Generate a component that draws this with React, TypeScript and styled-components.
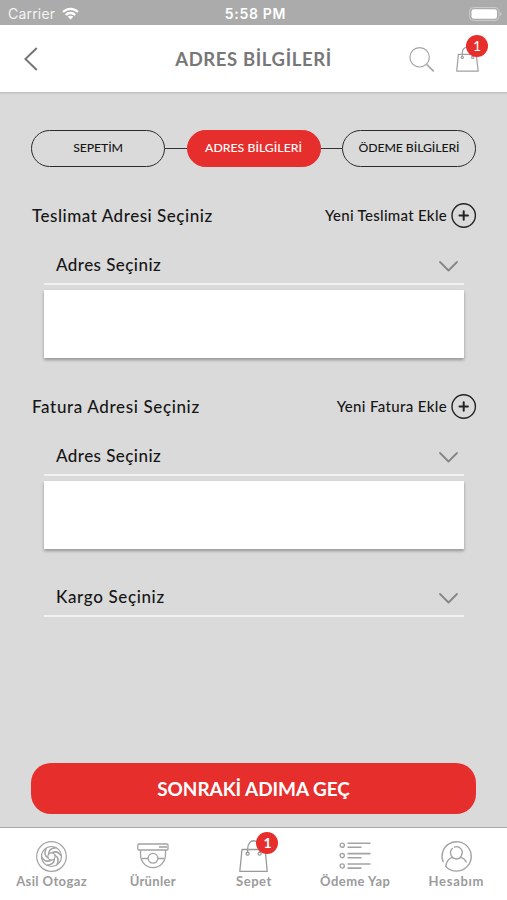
import React from "react";
import styled, { createGlobalStyle } from "styled-components";

const RED = "#e62e2d";
const INK = "#161616";
const GREY = "#a3a3a3";

const GlobalStyle = createGlobalStyle`
  * { box-sizing: border-box; }
  html, body { margin: 0; padding: 0; }
  body { font-family: Lato, "Open Sans", sans-serif; background: #dadada; color: ${INK}; }
  button { font: inherit; color: inherit; background: none; border: 0; padding: 0; margin: 0; }
  svg { display: block; fill: none; flex: none; overflow: visible; }
`;

const Screen = styled.div`
  width: 507px;
  height: 900px;
  display: flex;
  flex-direction: column;
  overflow: hidden;
  background: #dadada;
`;

const StatusBar = styled.div`
  height: 25px;
  flex: none;
  display: grid;
  grid-template-columns: 1fr auto 1fr;
  align-items: center;
  padding: 2px 5px 0 8px;
  background: #ababab;
  color: #fff;
  font-family: Inter, sans-serif;
  font-size: 14px;
`;

const Carrier = styled.div`
  display: flex;
  align-items: center;
  gap: 7px;
  letter-spacing: 0.2px;
  color: #f4f4f4;
`;

const Clock = styled.div`
  padding-left: 1px;
  font-weight: 600;
  letter-spacing: 0.68px;
`;

const Battery = styled.div`
  justify-self: end;
`;

const Header = styled.header`
  height: 68px;
  flex: none;
  display: grid;
  grid-template-columns: 150px 1fr 150px;
  align-items: center;
  background: #fff;
  border-bottom: 1px solid #c2c2c2;
  box-shadow: 0 1px 1px rgba(0, 0, 0, 0.06);
`;

const BackButton = styled.button`
  padding: 1px 0 0 24px;
  justify-self: start;
`;

const Title = styled.h1`
  margin: 0;
  text-align: center;
  white-space: nowrap;
  font-size: 18.5px;
  font-weight: 700;
  letter-spacing: 0.61px;
  color: #777;
`;

const Actions = styled.div`
  display: flex;
  align-items: center;
  gap: 22px;
  padding: 1px 0 0 52px;
`;

const BagWrap = styled.span<{ $w: number; $h: number }>`
  position: relative;
  display: block;
  width: ${(p) => p.$w}px;
  height: ${(p) => p.$h}px;
`;

const Badge = styled.span<{ $bold?: boolean; $top: number; $left: number }>`
  position: absolute;
  top: ${(p) => p.$top}px;
  left: ${(p) => p.$left}px;
  width: 22px;
  height: 22px;
  border-radius: 50%;
  background: ${RED};
  color: #fff;
  font-size: 14px;
  line-height: 22px;
  text-align: center;
  letter-spacing: 0;
  font-weight: ${(p) => (p.$bold ? 700 : 400)};
`;

const Content = styled.main`
  flex: 1;
  display: flex;
  flex-direction: column;
  padding: 37px 31px 13px;
`;

const Steps = styled.div`
  display: flex;
  align-items: center;
  height: 37px;
  flex: none;
`;

const Step = styled.div<{ $active?: boolean; $ls: number }>`
  width: 134px;
  height: 37px;
  display: flex;
  align-items: center;
  justify-content: center;
  border: 1.5px solid ${(p) => (p.$active ? RED : "#2b2b2b")};
  border-radius: 19px;
  background: ${(p) => (p.$active ? RED : "transparent")};
  color: ${(p) => (p.$active ? "#fff" : INK)};
  font-size: 12.3px;
  font-weight: 500;
  letter-spacing: ${(p) => p.$ls}px;
  white-space: nowrap;
  padding-bottom: 2px;
`;

const Connector = styled.div`
  flex: 1;
  height: 1.5px;
  background: #333;
`;

const Section = styled.section<{ $gap: number }>`
  margin-top: ${(p) => p.$gap}px;
`;

const SectionHead = styled.div`
  height: 25px;
  display: flex;
  align-items: center;
  justify-content: space-between;
`;

const SectionTitle = styled.h2<{ $ls: number }>`
  margin: 0 0 0 1px;
  font-size: 17px;
  font-weight: 500;
  letter-spacing: ${(p) => p.$ls}px;
  color: ${INK};
`;

const AddButton = styled.button<{ $ls: number }>`
  display: flex;
  align-items: center;
  gap: 4px;
  font-size: 15px;
  font-weight: 500;
  letter-spacing: ${(p) => p.$ls}px;
`;

const AddLabel = styled.span`
  padding-bottom: 1px;
`;

const Select = styled.div<{ $ls: number; $gap: number }>`
  height: 38px;
  margin: ${(p) => p.$gap}px 12px 0 13px;
  padding: 0 6px 0 12px;
  display: flex;
  align-items: center;
  justify-content: space-between;
  border-bottom: 2px solid #f1f1f1;
  font-size: 17px;
  font-weight: 500;
  letter-spacing: ${(p) => p.$ls}px;
`;

const SelectLabel = styled.span`
  padding-bottom: 2px;
`;

const AddressBox = styled.div`
  height: 68px;
  margin: 5px 12px 0 13px;
  background: #fff;
  box-shadow: 0 2px 3px rgba(0, 0, 0, 0.32);
`;

const NextButton = styled.button`
  margin-top: auto;
  height: 51px;
  flex: none;
  border-radius: 20px;
  background: ${RED};
  color: #fff;
  font-size: 19px;
  font-weight: 700;
  letter-spacing: -0.08px;
`;

const TabBar = styled.nav`
  height: 73px;
  flex: none;
  display: grid;
  grid-template-columns: repeat(5, 1fr);
  padding-left: 1px;
  background: #fff;
  border-top: 1px solid #a9a9a9;
`;

const Tab = styled.a<{ $ls: number }>`
  display: flex;
  flex-direction: column;
  align-items: center;
  padding-top: 12px;
  color: #9b9b9b;
  font-size: 13px;
  font-weight: 700;
  line-height: 18px;
  letter-spacing: ${(p) => p.$ls}px;
  white-space: nowrap;
`;

const TabIcon = styled.span<{ $pad?: number }>`
  height: 32px;
  padding-top: ${(p) => p.$pad ?? 0}px;
  display: flex;
  align-items: flex-start;
  justify-content: center;
`;

const Plus = () => (
  <svg width="25" height="25" viewBox="0 0 25 25" stroke="#222">
    <circle cx="12.7" cy="12.5" r="11.7" strokeWidth="1.4" />
    <path d="M12.7 8.3v8.4M8.5 12.5h8.4" strokeWidth="2" strokeLinecap="round" />
  </svg>
);

const Chevron = () => (
  <svg width="19" height="14" viewBox="0 -3 19 14" stroke="#868686" strokeWidth="1.8" strokeLinecap="round" strokeLinejoin="round">
    <path d="M1 1l8.5 8.5L18 1" />
  </svg>
);

const Wifi = () => (
  <svg width="17" height="13" viewBox="0 0 17 13" stroke="#fff" strokeWidth="2.3">
    <path d="M1 5C5.2.7 11.8.7 16 5M3.8 8c2.7-2.7 6.7-2.7 9.4 0" />
    <path d="M5.7 9.8c1.6-1.5 4-1.5 5.6 0L8.5 12.6z" fill="#fff" stroke="none" />
  </svg>
);

const BatteryIcon = () => (
  <svg width="33" height="14" viewBox="0 0 33 14">
    <rect x="0.5" y="0.5" width="29.5" height="13" rx="4" stroke="#cacaca" />
    <rect x="2.5" y="2.2" width="25.5" height="9.6" rx="2.3" fill="#fff" />
    <path d="M31.3 5c1.5.7 1.5 3.3 0 4z" fill="#d5d5d5" />
  </svg>
);

const Search = () => (
  <svg width="25" height="25" viewBox="0 0 25 25" stroke="#a3a3a3" strokeWidth="1.2">
    <circle cx="10.6" cy="10.3" r="9.7" />
    <path d="M17.5 17.2l7.2 7.2" strokeWidth="1.6" />
  </svg>
);

const HeaderBag = () => (
  <svg width="23" height="26" viewBox="0 0 23 26" stroke="#a0a0a0" strokeWidth="1.2" strokeLinejoin="round">
    <path d="M2.4 8.3h17.8l2 16.8H.7z" />
    <path d="M6.3 10.5V6.8c0-7.7 10.4-7.7 10.4 0v3.7" />
    <circle cx="6.3" cy="11.4" r="1.1" />
    <circle cx="16.7" cy="11.4" r="1.1" />
  </svg>
);

const TabBag = () => (
  <svg width="29" height="32" viewBox="0 0 29 32" stroke="#999" strokeWidth="1.3" strokeLinejoin="round">
    <path d="M3 9.5h23.2l2 21.8H.8z" />
    <path d="M8.6 13V9c0-11 12 -11 12 0v4" />
    <circle cx="8.6" cy="13.7" r="1.5" />
    <circle cx="20.6" cy="13.7" r="1.5" />
  </svg>
);

const Turbine = () => (
  <svg width="31" height="31" viewBox="0 0 31 31" stroke={GREY} strokeWidth="1.2">
    <circle cx="15.5" cy="15.5" r="14.8" />
    <circle cx="15.5" cy="15.5" r="10" />
    <circle cx="15.5" cy="15.5" r="3.6" />
    {[0, 60, 120, 180, 240, 300].map((a) => (
      <path key={a} d="M12.6 13.4C12.6 9.6 15.4 6.9 20.2 6.8" strokeWidth="1.5" transform={`rotate(${a} 15.5 15.5)`} />
    ))}
  </svg>
);

const Camera = () => (
  <svg width="32" height="26" viewBox="0 0 32 26" stroke={GREY} strokeWidth="1.3">
    <rect x="0.8" y="1" width="30.2" height="6" rx="1" />
    <path d="M22 4h8" strokeWidth="1.6" />
    <path d="M3.5 7v4C3.5 19.2 9 24.6 16 24.6S28.5 19.2 28.5 11V7" />
    <path d="M5 15.5h6.1M20.9 15.5H27" />
    <circle cx="16" cy="15.3" r="4.9" />
  </svg>
);

const List = () => (
  <svg width="32" height="28" viewBox="0 0 32 28" stroke={GREY}>
    {[3.2, 13.6, 24].map((y) => (
      <React.Fragment key={y}>
        <circle cx="3.2" cy={y} r="2.1" strokeWidth="1.4" />
        <path d={`M8.5 ${y - 2}h23M8.5 ${y + 2.1}h14`} strokeWidth="1.6" />
      </React.Fragment>
    ))}
  </svg>
);

const Person = () => (
  <svg width="31" height="31" viewBox="0 0 31 31" stroke={GREY} strokeWidth="1.4" strokeLinecap="round">
    <path d="M2.1 20.8A14.6 14.6 0 1 1 27.1 24.4C24.4 28.1 20.2 30.1 15.5 30.1 11 30.1 7.4 28.5 4.8 25.4" />
    <path d="M4.8 25.4C5.2 20.9 7.5 17.7 11.2 16.4c2.6 2 6 2 8.7 0 2.5.8 4.3 2.5 5.3 4.5" />
    <path d="M11.3 7.5a6 6 0 0 0-1.2 6.7M13.3 6.1c4.9-2 9.9 3.4 7.2 8.1M10.1 14.2c.4.8.7 1.4 1.3 2M20.5 14.2c-.3.7-.7 1.5-1.2 2" />
  </svg>
);

export default function App() {
  return (
    <>
      <GlobalStyle />
      <Screen>
        <StatusBar>
          <Carrier>
            Carrier
            <Wifi />
          </Carrier>
          <Clock>5:58 PM</Clock>
          <Battery>
            <BatteryIcon />
          </Battery>
        </StatusBar>

        <Header>
          <BackButton aria-label="Geri">
            <svg width="14" height="24" viewBox="0 0 14 24" stroke="#747474" strokeWidth="1.9">
              <path d="M12.8 1L1.4 12l11.4 11" />
            </svg>
          </BackButton>
          <Title>ADRES BİLGİLERİ</Title>
          <Actions>
            <Search />
            <BagWrap $w={23} $h={26}>
              <HeaderBag />
              <Badge $top={-11} $left={10}>1</Badge>
            </BagWrap>
          </Actions>
        </Header>

        <Content>
          <Steps>
            <Step $ls={-0.12}>SEPETİM</Step>
            <Connector />
            <Step $active $ls={0}>ADRES BİLGİLERİ</Step>
            <Connector />
            <Step $ls={-0.1}>ÖDEME BİLGİLERİ</Step>
          </Steps>

          <Section $gap={36}>
            <SectionHead>
              <SectionTitle $ls={0.53}>Teslimat Adresi Seçiniz</SectionTitle>
              <AddButton $ls={0.29}>
                <AddLabel>Yeni Teslimat Ekle</AddLabel>
                <Plus />
              </AddButton>
            </SectionHead>
            <Select $ls={0.44} $gap={19}>
              <SelectLabel>Adres Seçiniz</SelectLabel>
              <Chevron />
            </Select>
            <AddressBox />
          </Section>

          <Section $gap={36}>
            <SectionHead>
              <SectionTitle $ls={0.64}>Fatura Adresi Seçiniz</SectionTitle>
              <AddButton $ls={0.35}>
                <AddLabel>Yeni Fatura Ekle</AddLabel>
                <Plus />
              </AddButton>
            </SectionHead>
            <Select $ls={0.44} $gap={19}>
              <SelectLabel>Adres Seçiniz</SelectLabel>
              <Chevron />
            </Select>
            <AddressBox />
          </Section>

          <Section $gap={30}>
            <Select $ls={0.64} $gap={0}>
              <SelectLabel>Kargo Seçiniz</SelectLabel>
              <Chevron />
            </Select>
          </Section>

          <NextButton>SONRAKİ ADIMA GEÇ</NextButton>
        </Content>

        <TabBar>
          <Tab $ls={0.39}>
            <TabIcon $pad={0.5}><Turbine /></TabIcon>
            Asil Otogaz
          </Tab>
          <Tab $ls={0.31}>
            <TabIcon $pad={2.5}><Camera /></TabIcon>
            Ürünler
          </Tab>
          <Tab $ls={0.54}>
            <TabIcon>
              <BagWrap $w={29} $h={32}>
                <TabBag />
                <Badge $bold $top={-8} $left={17}>1</Badge>
              </BagWrap>
            </TabIcon>
            Sepet
          </Tab>
          <Tab $ls={0.46}>
            <TabIcon $pad={2}><List /></TabIcon>
            Ödeme Yap
          </Tab>
          <Tab $ls={0.7}>
            <TabIcon $pad={0.5}><Person /></TabIcon>
            Hesabım
          </Tab>
        </TabBar>
      </Screen>
    </>
  );
}
